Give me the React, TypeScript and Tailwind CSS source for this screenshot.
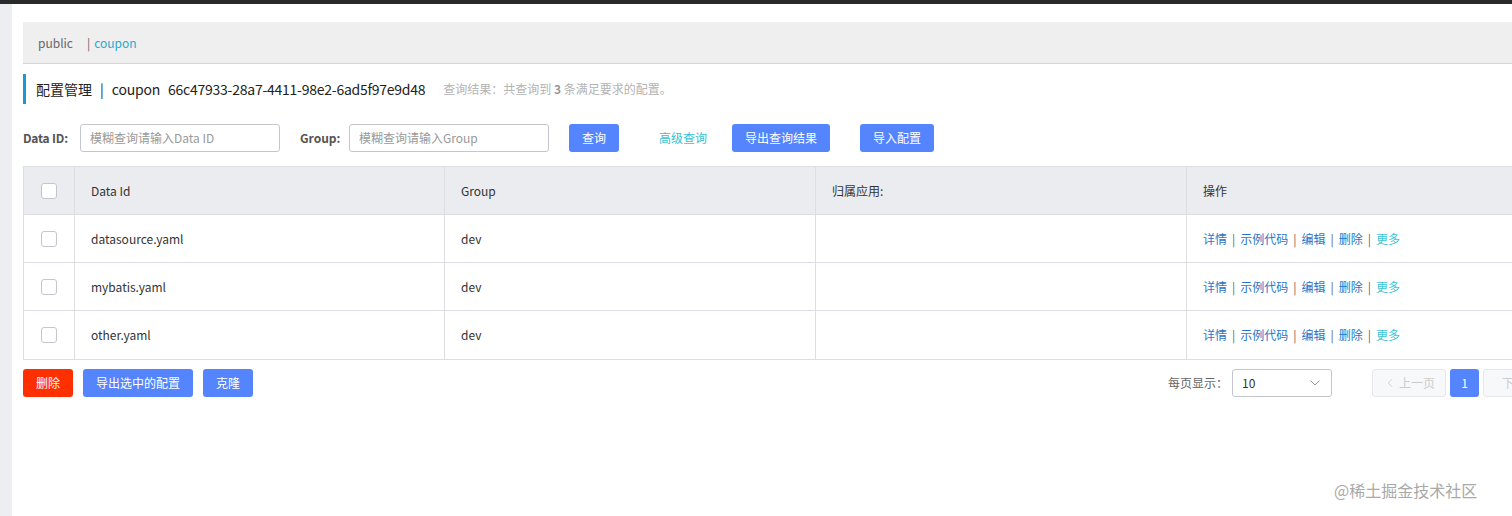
import { ChevronDown, ChevronLeft } from 'lucide-react'

const rows = [
  { id: 'datasource.yaml', group: 'dev' },
  { id: 'mybatis.yaml', group: 'dev' },
  { id: 'other.yaml', group: 'dev' },
]

function Checkbox() {
  return <span className="block w-4 h-4 rounded-[3px] border border-[#c4c6cf] bg-white" />
}

function Sep() {
  return <span className="mx-[5px] text-[#666]">|</span>
}

export default function App() {
  return (
    <div className="h-[516px] flex flex-col overflow-hidden bg-white font-['Noto_Sans_CJK_SC','Noto_Sans',sans-serif] text-[12px] text-[#333]">
      <div className="h-1 shrink-0 bg-[#2a2a2a]" />
      <div className="flex flex-1 min-h-0">
        <div className="w-3 shrink-0 bg-[#eceef1]" />
        <div className="flex-1 overflow-hidden pl-[11px] pt-[18px]">
          <div className="w-[1534px]">
            {/* breadcrumb */}
            <div className="h-[42px] flex items-center pl-[15px] bg-[#efefef] border-b border-[#d6d6d6]">
              <span className="text-[#666]">public</span>
              <span className="ml-[14px] text-[#666]">|</span>
              <span className="ml-[4px] text-[#2aa8d0]">coupon</span>
            </div>

            {/* title */}
            <div className="mt-[10px] flex items-center h-[30px] border-l-[3px] border-[#1a9ad0] pl-[10px]">
              <span className="text-[14px] text-[#222]">配置管理</span>
              <span className="text-[14px] text-[#222] mx-[8px]">|</span>
              <span className="text-[14px] text-[#222] tracking-[-0.2px]">coupon</span>
              <span className="text-[14px] text-[#222] ml-[8px] tracking-[-0.25px]">66c47933-28a7-4411-98e2-6ad5f97e9d48</span>
              <span className="ml-[18px] text-[#b3b3b3]">
                查询结果：共查询到 <strong className="font-bold text-[#999]">3</strong> 条满足要求的配置。
              </span>
            </div>

            {/* filters */}
            <div className="mt-[20px] flex items-center h-[28px]">
              <span className="font-bold text-[#555] w-[57px] tracking-[-0.2px]">Data ID:</span>
              <div className="w-[200px] h-[28px] border border-[#c4c6cf] rounded-[3px] flex items-center px-[9px] text-[#999]">
                模糊查询请输入Data ID
              </div>
              <span className="ml-[20px] font-bold text-[#555] w-[49px]">Group:</span>
              <div className="w-[200px] h-[28px] border border-[#c4c6cf] rounded-[3px] flex items-center px-[9px] text-[#999]">
                模糊查询请输入Group
              </div>
              <button className="ml-[20px] w-[50px] h-[28px] rounded-[3px] bg-[#5584ff] text-white">查询</button>
              <span className="ml-[40px] text-[#33c2d6]">高级查询</span>
              <button className="ml-[25px] w-[98px] h-[28px] rounded-[3px] bg-[#5584ff] text-white">导出查询结果</button>
              <button className="ml-[30px] w-[74px] h-[28px] rounded-[3px] bg-[#5584ff] text-white">导入配置</button>
            </div>

            {/* table */}
            <div className="mt-[14px] border border-[#dcdee3]">
              <div className="grid grid-cols-[50px_370px_371px_371px_1fr] h-[48px] bg-[#ebecf0] border-b border-[#dcdee3]">
                <div className="flex items-center justify-center"><Checkbox /></div>
                <div className="flex items-center pl-[16px] border-l border-[#dcdee3]">Data Id</div>
                <div className="flex items-center pl-[16px] border-l border-[#dcdee3]">Group</div>
                <div className="flex items-center pl-[16px] border-l border-[#dcdee3]">归属应用:</div>
                <div className="flex items-center pl-[16px] border-l border-[#dcdee3]">操作</div>
              </div>
              {rows.map((r, i) => (
                <div
                  key={r.id}
                  className={`grid grid-cols-[50px_370px_371px_371px_1fr] h-[48px] ${i < rows.length - 1 ? 'border-b border-[#dcdee3]' : ''}`}
                >
                  <div className="flex items-center justify-center"><Checkbox /></div>
                  <div className="flex items-center pl-[16px] border-l border-[#dcdee3]">{r.id}</div>
                  <div className="flex items-center pl-[16px] border-l border-[#dcdee3]">{r.group}</div>
                  <div className="border-l border-[#dcdee3]" />
                  <div className="flex items-center pl-[16px] border-l border-[#dcdee3] text-[#2a74c8]">
                    <span>详情</span>
                    <Sep />
                    <span>示例代码</span>
                    <Sep />
                    <span>编辑</span>
                    <Sep />
                    <span>删除</span>
                    <Sep />
                    <span className="text-[#3cc3d6]">更多</span>
                  </div>
                </div>
              ))}
            </div>

            {/* footer */}
            <div className="mt-[9px] flex items-center h-[28px]">
              <button className="w-[50px] h-[28px] rounded-[3px] bg-[#ff3000] text-white">删除</button>
              <button className="ml-[10px] w-[110px] h-[28px] rounded-[3px] bg-[#5584ff] text-white">导出选中的配置</button>
              <button className="ml-[10px] w-[50px] h-[28px] rounded-[3px] bg-[#5584ff] text-white">克隆</button>
              <div className="ml-auto flex items-center">
                <span className="text-[#666]">每页显示：</span>
                <div className="ml-[4px] w-[100px] h-[28px] border border-[#c4c6cf] rounded-[3px] flex items-center justify-between pl-[9px] pr-[8px] text-[#333]">
                  <span>10</span>
                  <ChevronDown size={16} strokeWidth={1.3} className="text-[#888]" />
                </div>
                <button className="ml-[40px] w-[74px] h-[28px] rounded-[3px] border border-[#e6e7eb] bg-[#f7f8fa] text-[#ccc] flex items-center justify-center gap-[2px]">
                  <ChevronLeft size={14} strokeWidth={1.5} />
                  上一页
                </button>
                <button className="ml-[4px] w-[29px] h-[28px] rounded-[3px] bg-[#5584ff] text-white">1</button>
                <button className="ml-[4px] w-[74px] h-[28px] rounded-[3px] border border-[#e6e7eb] bg-[#f7f8fa] text-[#ccc]">下一页</button>
              </div>
            </div>
          </div>
        </div>
      </div>
      <div className="absolute left-[1334px] top-[478px] text-[16px] text-[#a9a9a9]">@稀土掘金技术社区</div>
    </div>
  )
}
